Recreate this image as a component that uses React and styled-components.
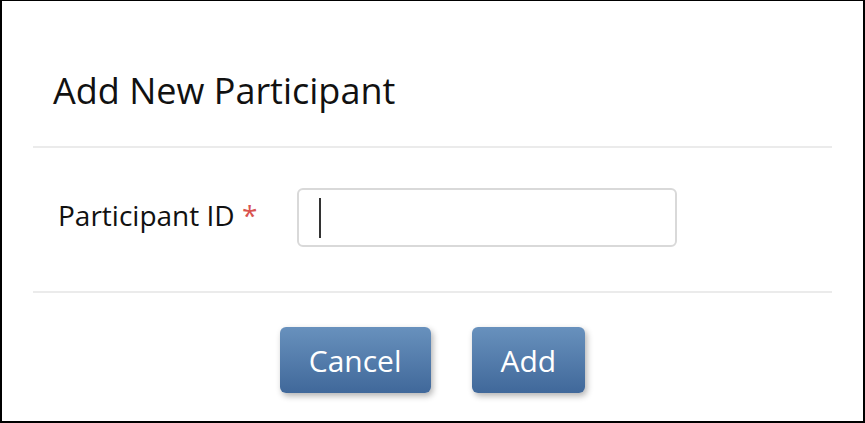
import React from "react";
import styled, { createGlobalStyle } from "styled-components";

const Global = createGlobalStyle`
  html, body {
    margin: 0;
    padding: 0;
    background: #fff;
  }
  body {
    font-family: "Open Sans", "Noto Sans", sans-serif;
  }
`;

const Frame = styled.div`
  box-sizing: border-box;
  width: 865px;
  height: 423px;
  border: 1px solid #000;
  border-left-width: 2px;
  border-right-width: 2px;
  border-bottom-width: 2px;
  background: #fff;
  display: flex;
  flex-direction: column;
  padding: 0 31px 0 31px;
`;

const Header = styled.div`
  height: 145px;
  display: flex;
  align-items: center;
  padding: 0 20px;
  border-bottom: 2px solid #ebebeb;
`;

const Title = styled.h2`
  margin: 0;
  margin-top: 34px;
  font-weight: 400;
  font-size: 36px;
  line-height: 1.2;
  color: #111;
`;

const Body = styled.div`
  height: 143px;
  display: flex;
  align-items: center;
  padding-left: 25px;
  border-bottom: 2px solid #ebebeb;
`;

const Label = styled.label`
  width: 239px;
  font-size: 28px;
  line-height: 1.2;
  color: #111;
  margin-top: -8px;
`;

const Required = styled.span`
  color: #d9534f;
`;

const Input = styled.div`
  box-sizing: border-box;
  width: 380px;
  height: 59px;
  border: 2px solid #d9d9d9;
  border-radius: 6px;
  display: flex;
  align-items: center;
  padding-left: 20px;
  margin-top: -4px;
`;

const Caret = styled.span`
  width: 2px;
  height: 40px;
  background: #333;
`;

const Footer = styled.div`
  flex: 1;
  display: flex;
  justify-content: center;
  align-items: center;
  gap: 41px;
  padding-top: 6px;
`;

const Button = styled.button`
  height: 66px;
  padding: 0 ${(p) => p.pad}px;
  border: none;
  border-radius: 6px;
  background: linear-gradient(#6891bd, #40689a);
  color: #fff;
  font-family: "Open Sans", "Noto Sans", sans-serif;
  font-size: 30px;
  box-shadow: 2px 3px 6px rgba(0, 0, 0, 0.3);
  cursor: pointer;
`;

export default function App() {
  return (
    <>
      <Global />
      <Frame>
        <Header>
          <Title>Add New Participant</Title>
        </Header>
        <Body>
          <Label>
            Participant ID <Required>*</Required>
          </Label>
          <Input>
            <Caret />
          </Input>
        </Body>
        <Footer>
          <Button pad={29}>Cancel</Button>
          <Button pad={29}>Add</Button>
        </Footer>
      </Frame>
    </>
  );
}
